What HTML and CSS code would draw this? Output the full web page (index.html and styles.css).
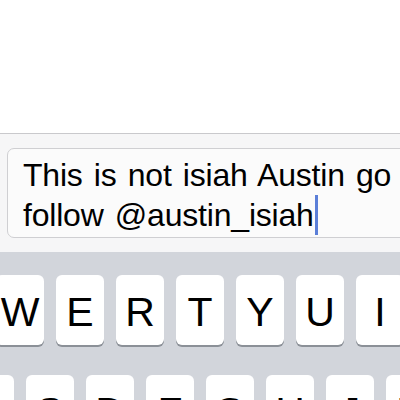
FILE: index.html
```html
<!DOCTYPE html>
<html lang="en">
<head>
  <meta charset="UTF-8">
  <meta name="viewport" content="width=device-width, initial-scale=1.0">
  <title>Compose</title>
  <link rel="stylesheet" href="styles.css">
</head>
<body>

  <div class="screen">
    <!-- Zona superior vacia -->
    <div class="content"></div>

    <!-- Barra de entrada -->
    <div class="toolbar">
      <div class="field">
        <p>This is not isiah Austin go follow @austin_isiah<span class="caret"></span></p>
      </div>
    </div>

    <!-- Teclado -->
    <div class="keyboard">
      <div class="row row-1">
        <div class="key">Q</div>
        <div class="key">W</div>
        <div class="key">E</div>
        <div class="key">R</div>
        <div class="key">T</div>
        <div class="key">Y</div>
        <div class="key">U</div>
        <div class="key">I</div>
      </div>
      <div class="row row-2">
        <div class="key">A</div>
        <div class="key">S</div>
        <div class="key">D</div>
        <div class="key">F</div>
        <div class="key">G</div>
        <div class="key">H</div>
        <div class="key">J</div>
        <div class="key">K</div>
      </div>
    </div>
  </div>

</body>
</html>
```

FILE: styles.css
```css
* {
  margin: 0;
  padding: 0;
  box-sizing: border-box;
}

body, html {
  width: 100%;
  height: 100%;
  overflow: hidden;
  background: white;
  font-family: 'Liberation Sans', Arial, sans-serif;
  color: black;
}

.screen {
  display: flex;
  flex-direction: column;
  height: 100%;
  overflow: hidden;
}

.content {
  height: 133px;
  flex-shrink: 0;
  background: white;
}

.toolbar {
  height: 119px;
  flex-shrink: 0;
  background: #f6f6f7;
  border-top: 1px solid #c9c9cc;
  padding-top: 14px;
  padding-left: 7px;
  overflow: hidden;
}

.field {
  width: 420px;
  height: 90px;
  background: #fbfbfb;
  border: 1px solid #cfcfd2;
  border-radius: 7px;
  padding: 7px 0 0 15px;
}

.field p {
  font-size: 32px;
  line-height: 39px;
  width: 385px;
  letter-spacing: -0.2px;
  word-spacing: 2.5px;
}

.caret {
  display: inline-block;
  width: 3px;
  height: 40px;
  background: #5b7fd8;
  vertical-align: -9px;
  margin-left: 1px;
}

.keyboard {
  flex: 1;
  background: #d2d5db;
  padding-top: 23px;
  display: flex;
  flex-direction: column;
  gap: 30px;
  overflow: hidden;
}

.row {
  display: flex;
  gap: 12px;
}

.row-1 {
  margin-left: -64px;
}

.row-2 {
  margin-left: -34px;
}

.key {
  flex-shrink: 0;
  width: 48px;
  height: 70px;
  background: white;
  border-radius: 6px;
  box-shadow: 0 2px 0 #8b9097;
  display: flex;
  align-items: center;
  justify-content: center;
  font-size: 41px;
  padding-top: 4px;
}
```
